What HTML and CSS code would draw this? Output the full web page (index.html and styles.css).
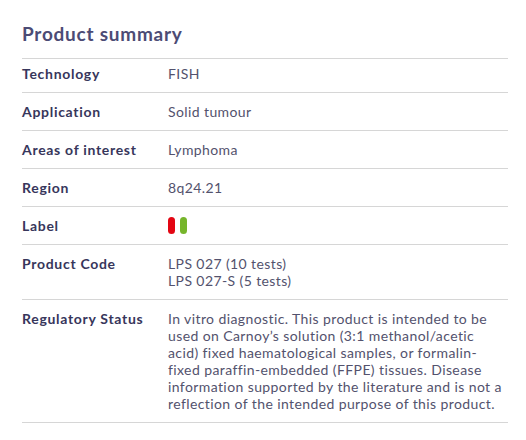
FILE: index.html
```html
<!DOCTYPE html>
<html lang="en">
<head>
<meta charset="utf-8">
<title>Product summary</title>
<link rel="stylesheet" href="styles.css">
</head>
<body>
<section class="summary">
  <h2 class="summary-title">Product summary</h2>
  <dl class="spec">
    <div class="spec-row">
      <dt>Technology</dt>
      <dd>FISH</dd>
    </div>
    <div class="spec-row">
      <dt>Application</dt>
      <dd>Solid tumour</dd>
    </div>
    <div class="spec-row">
      <dt>Areas of interest</dt>
      <dd>Lymphoma</dd>
    </div>
    <div class="spec-row">
      <dt>Region</dt>
      <dd>8q24.21</dd>
    </div>
    <div class="spec-row">
      <dt>Label</dt>
      <dd class="labels"><span class="pill pill-red"></span><span class="pill pill-green"></span></dd>
    </div>
    <div class="spec-row">
      <dt>Product Code</dt>
      <dd>LPS 027 (10 tests)<br>LPS 027-S (5 tests)</dd>
    </div>
    <div class="spec-row">
      <dt>Regulatory Status</dt>
      <dd class="regulatory">In vitro diagnostic. This product is intended to be<br>used on Carnoy’s solution (3:1 methanol/acetic<br>acid) fixed haematological samples, or formalin-<br>fixed paraffin-embedded (FFPE) tissues. Disease<br>information supported by the literature and is not a<br>reflection of the intended purpose of this product.</dd>
    </div>
  </dl>
</section>
</body>
</html>
```

FILE: styles.css
```css
* { box-sizing: border-box; }
html, body { margin: 0; padding: 0; background: #ffffff; }
body {
  font-family: "Lato", "Liberation Sans", sans-serif;
  color: #4d4c68;
}
.summary {
  width: 508px;
  padding: 22px 0 0 22px;
}
.summary-title {
  margin: 0 0 13px 0;
  font-size: 19px;
  line-height: 23px;
  font-weight: 700;
  letter-spacing: 0.75px;
  color: #4c4b75;
}
.spec {
  margin: 0;
  border-top: 1px solid #d6d6d6;
}
.spec-row {
  display: grid;
  grid-template-columns: 146px 1fr;
  padding: 10px 0 10px 0;
  border-bottom: 1px solid #d6d6d6;
  font-size: 14px;
  line-height: 17px;
}
.spec-row:first-child {
  padding-top: 6px;
}
.spec-row dt {
  font-weight: 700;
  letter-spacing: 0.7px;
  color: #37365b;
}
.spec-row dd {
  margin: 0;
  letter-spacing: 0.4px;
  color: #53526d;
}
.regulatory {
  white-space: nowrap;
}
.labels {
  display: flex;
  gap: 5px;
  align-items: center;
}
.pill {
  display: block;
  width: 7px;
  height: 17px;
  border-radius: 4px;
}
.pill-red { background: #e30613; }
.pill-green { background: #76b52b; }
```
